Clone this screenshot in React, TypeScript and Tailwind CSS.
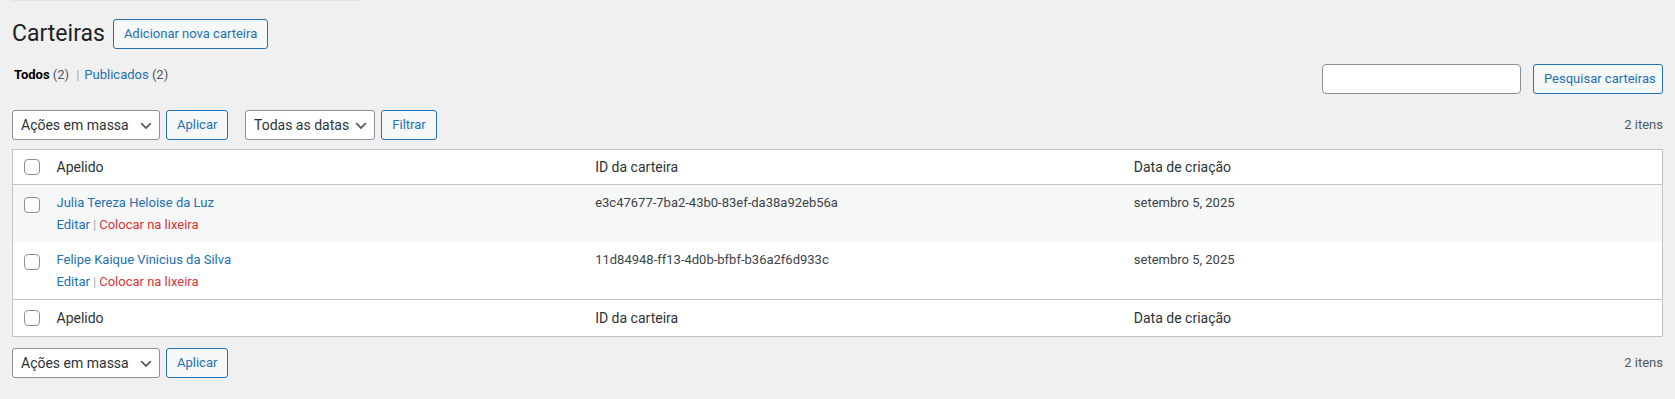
import { useState } from 'react';

const rows = [
  { id: 1, name: 'Julia Tereza Heloise da Luz', wallet: 'e3c47677-7ba2-43b0-83ef-da38a92eb56a', date: 'setembro 5, 2025' },
  { id: 2, name: 'Felipe Kaique Vinicius da Silva', wallet: '11d84948-ff13-4d0b-bfbf-b36a2f6d933c', date: 'setembro 5, 2025' },
];

function Checkbox({ checked, onChange }: { checked: boolean; onChange: () => void }) {
  return (
    <input
      type="checkbox"
      checked={checked}
      onChange={onChange}
      className="ml-[11px] block h-4 w-4 appearance-none rounded-[4px] border border-[#8c8f94] bg-white checked:bg-[#2271b1]"
    />
  );
}

function Select({ label, width }: { label: string; width: string }) {
  return (
    <div className={`relative h-[30px] ${width}`}>
      <select className="h-full w-full appearance-none rounded-[3px] border border-[#8c8f94] bg-white pl-2 pr-6 text-[14px] text-[#2c3338] outline-none">
        <option>{label}</option>
      </select>
      <svg viewBox="0 0 20 20" className="pointer-events-none absolute right-[6px] top-[8px] h-4 w-4">
        <path d="M5 6l5 5 5-5 2 1-7 7-7-7 2-1z" fill="#50575e" />
      </svg>
    </div>
  );
}

function Button({ children, className = '' }: { children: React.ReactNode; className?: string }) {
  return (
    <button className={`h-[30px] whitespace-nowrap rounded-[3px] border border-[#2271b1] bg-[#f6f7f7] px-[10px] text-[13px] text-[#2271b1] ${className}`}>
      {children}
    </button>
  );
}

export default function App() {
  const [checked, setChecked] = useState<number[]>([]);
  const allChecked = checked.length === rows.length;
  const toggleAll = () => setChecked(allChecked ? [] : rows.map(r => r.id));
  const toggle = (id: number) =>
    setChecked(prev => (prev.includes(id) ? prev.filter(x => x !== id) : [...prev, id]));

  return (
    <div className="min-h-screen bg-[#f0f0f1] px-3 font-['Roboto',sans-serif] text-[13px] text-[#3c434a]">
      <div className="h-px w-[348px] bg-[#e4e4e5]" />

      <div className="flex items-center gap-2 pt-[18px]">
        <h1 className="text-[23px] font-normal leading-[30px] text-[#1d2327]">Carteiras</h1>
        <Button className="h-[29px]">Adicionar nova carteira</Button>
      </div>

      <div className="mt-[15px] flex items-start justify-between">
        <ul className="flex pl-[2px] pt-[1px] leading-5 text-[#50575e]">
          <li>
            <span className="font-bold text-black">Todos</span> (2)
            <span className="pl-[7px] pr-[5px] text-[#a7aaad]">|</span>
          </li>
          <li>
            <a className="text-[#2271b1]">Publicados</a> (2)
          </li>
        </ul>
        <div className="flex gap-3">
          <input className="h-[30px] w-[199px] rounded-[4px] border border-[#8c8f94] bg-white px-2 outline-none" />
          <Button className="w-[130px] px-0">Pesquisar carteiras</Button>
        </div>
      </div>

      <div className="mt-4 flex items-center justify-between">
        <div className="flex items-center">
          <Select label="Ações em massa" width="w-[148px]" />
          <Button className="ml-[6px] w-[62px] px-0">Aplicar</Button>
          <Select label="Todas as datas" width="ml-[17px] w-[130px]" />
          <Button className="ml-[6px] w-[56px] px-0">Filtrar</Button>
        </div>
        <span className="text-[#50575e]">2 itens</span>
      </div>

      <table className="mt-[9px] w-full table-fixed border-collapse border border-[#c3c4c7] bg-white">
        <thead>
          <tr className="border-b border-[#c3c4c7] text-left text-[14px] text-[#2c3338]">
            <th className="w-[34px] p-0 align-middle">
              <Checkbox checked={allChecked} onChange={toggleAll} />
            </th>
            <th className="px-[10px] py-2 font-normal leading-[18px]">Apelido</th>
            <th className="px-[10px] py-2 font-normal leading-[18px]">ID da carteira</th>
            <th className="px-[10px] py-2 font-normal leading-[18px]">Data de criação</th>
          </tr>
        </thead>
        <tbody>
          {rows.map((r, i) => (
            <tr key={r.id} className={i % 2 === 0 ? 'bg-[#f6f7f7]' : 'bg-white'}>
              <th className="p-0 pt-3 align-top">
                <Checkbox checked={checked.includes(r.id)} onChange={() => toggle(r.id)} />
              </th>
              <td className="px-[10px] py-2 align-top leading-[19.5px]">
                <a className="text-[#2271b1]">{r.name}</a>
                <div className="pt-[2px]">
                  <a className="text-[#2271b1]">Editar</a>
                  <span className="px-[3px] text-[#a7aaad]">|</span>
                  <a className="text-[#d63638]">Colocar na lixeira</a>
                </div>
              </td>
              <td className="px-[10px] py-2 align-top leading-[19.5px]">{r.wallet}</td>
              <td className="px-[10px] py-2 align-top leading-[19.5px]">{r.date}</td>
            </tr>
          ))}
        </tbody>
        <tfoot>
          <tr className="border-t border-[#c3c4c7] text-left text-[14px] text-[#2c3338]">
            <th className="w-[34px] p-0 align-middle">
              <Checkbox checked={allChecked} onChange={toggleAll} />
            </th>
            <th className="px-[10px] py-2 font-normal leading-5">Apelido</th>
            <th className="px-[10px] py-2 font-normal leading-5">ID da carteira</th>
            <th className="px-[10px] py-2 font-normal leading-5">Data de criação</th>
          </tr>
        </tfoot>
      </table>

      <div className="mt-[11px] flex items-center justify-between pb-4">
        <div className="flex items-center">
          <Select label="Ações em massa" width="w-[148px]" />
          <Button className="ml-[6px] w-[62px] px-0">Aplicar</Button>
        </div>
        <span className="text-[#50575e]">2 itens</span>
      </div>
    </div>
  );
}
